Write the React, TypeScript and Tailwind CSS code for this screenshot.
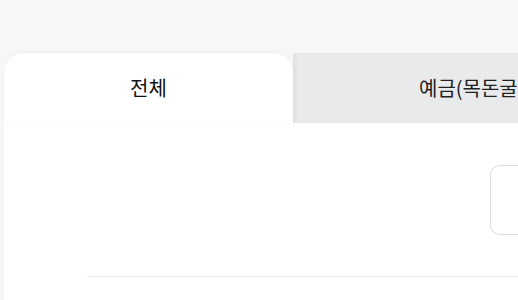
import React from 'react';

const tabs = ['전체', '예금(목돈굴리기)'];

export default function App() {
  return (
    <div
      className="h-[300px] w-[518px] overflow-hidden bg-[#f7f7f7] pl-[4px] pt-[53px]"
      style={{ fontFamily: '"Noto Sans CJK KR", "Noto Sans", sans-serif' }}
    >
      {/* Tabs */}
      <div className="flex h-[70px] w-[700px]">
        <div className="relative z-10 flex w-[289px] shrink-0 items-center justify-center rounded-t-[20px] bg-white text-[20px] text-[#111] shadow-[0_-1px_4px_rgba(0,0,0,0.04)]">
          {tabs[0]}
        </div>
        <div className="flex w-[300px] shrink-0 items-center whitespace-nowrap bg-[#e9eaec] pl-[126px] text-[20px] text-[#222] shadow-[inset_6px_0_6px_-4px_rgba(0,0,0,0.05)]">
          {tabs[1]}
        </div>
      </div>

      {/* Panel */}
      <div className="h-[200px] bg-white pt-[42px]">
        <div className="flex justify-end">
          <div className="h-[70px] w-[28px] rounded-l-[10px] border border-r-0 border-[#dddddd] bg-white" />
        </div>
        <div className="ml-[83px] mt-[41px] h-px bg-[#e8e8e8]" />
      </div>
    </div>
  );
}
